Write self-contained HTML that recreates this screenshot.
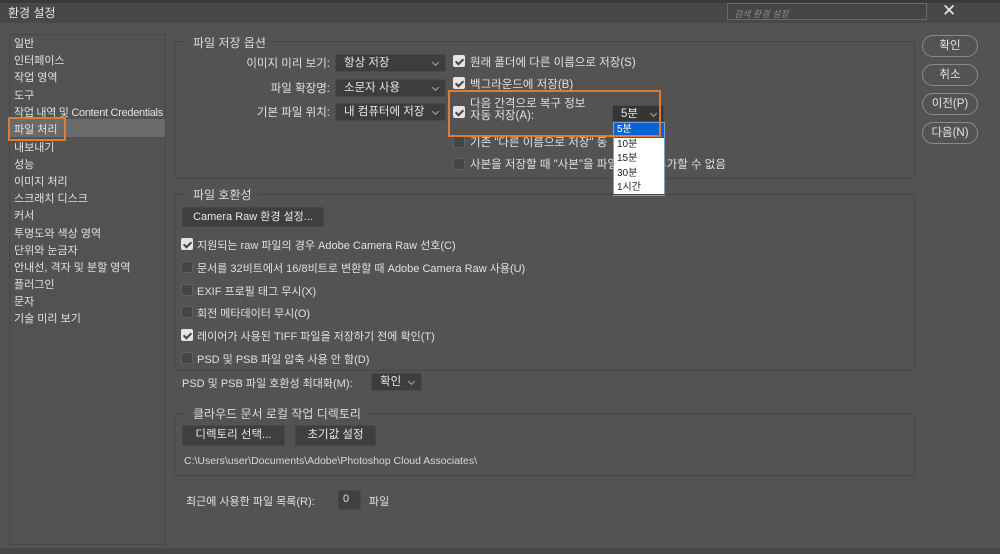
<!DOCTYPE html>
<html><head><meta charset="utf-8"><style>
*{margin:0;padding:0;box-sizing:border-box}
body{width:1000px;height:554px;background:#535353;font-family:"Liberation Sans","Noto Sans CJK KR",sans-serif;font-size:11px;color:#e0e0e0;position:relative;overflow:hidden}
.a{position:absolute;white-space:nowrap}
.fs{position:absolute;border:1px solid #474747;border-radius:2px}
.lg{position:absolute;background:#535353;padding:0 5px;font-size:12px;color:#dcdcdc}
.sel{position:absolute;background:#3d3d3d;border:1px solid #4a4a4a;padding-left:8px;line-height:16px;font-size:11.5px;color:#e8e8e8}
.sel:after{content:"";position:absolute;right:7px;top:5px;width:4px;height:4px;border-right:1px solid #aaa;border-bottom:1px solid #aaa;transform:rotate(45deg)}
.cb{position:absolute;width:12px;height:12px;border-radius:2px;background:#454545;border:1px solid #606060}
.cb.on{background:#e4e4e4;border-color:#e4e4e4}
.cb.on:after{content:"";position:absolute;left:3px;top:1px;width:3px;height:6px;border-right:2px solid #444;border-bottom:2px solid #444;transform:rotate(45deg)}
.btn{position:absolute;background:#3f3f3f;border:1px solid #474747;text-align:center;font-size:11px;color:#e8e8e8}
.pill{position:absolute;width:56px;height:22px;border:1px solid #8a8a8a;border-radius:11px;text-align:center;line-height:20px;font-size:11.5px;color:#e4e4e4}
.sb{position:absolute;left:14px;font-size:11px;color:#e0e0e0}
</style></head><body>
<div class="a" style="left:0;top:0;width:1000px;height:3px;background:#3a3a3a"></div>
<div class="a" style="left:0;top:3px;width:1000px;height:20px;background:#484848"></div>
<div class="a" style="left:8px;top:4px;font-size:12px;color:#e6e6e6">환경 설정</div>
<div class="a" style="left:727px;top:3px;width:200px;height:17px;border:1px solid #6a6a6a;background:#454545;color:#8a8a8a;font-style:italic;font-size:9px;padding:3px 6px">검색 환경 설정</div>
<div class="a" style="left:942px;top:1px;font-size:17px;color:#e6e6e6">✕</div>

<div class="a" style="left:9px;top:34px;width:157px;height:511px;border:1px solid #474747;background:#525252"></div>
<div class="a" style="left:10px;top:119px;width:155px;height:18px;background:#6b6b6b"></div>
<div class="sb a" style="top:35px">일반</div>
<div class="sb a" style="top:52px">인터페이스</div>
<div class="sb a" style="top:69px">작업 영역</div>
<div class="sb a" style="top:87px">도구</div>
<div class="sb a" style="top:104px;letter-spacing:-0.3px">작업 내역 및 Content Credentials</div>
<div class="sb a" style="top:121px">파일 처리</div>
<div class="a" style="left:8px;top:117px;width:58px;height:24px;border:2px solid #e07b33"></div>
<div class="sb a" style="top:139px">내보내기</div>
<div class="sb a" style="top:156px">성능</div>
<div class="sb a" style="top:173px">이미지 처리</div>
<div class="sb a" style="top:190px">스크래치 디스크</div>
<div class="sb a" style="top:207px">커서</div>
<div class="sb a" style="top:225px">투명도와 색상 영역</div>
<div class="sb a" style="top:242px">단위와 눈금자</div>
<div class="sb a" style="top:259px">안내선, 격자 및 분할 영역</div>
<div class="sb a" style="top:276px">플러그인</div>
<div class="sb a" style="top:293px">문자</div>
<div class="sb a" style="top:310px">기술 미리 보기</div>

<div class="fs" style="left:174px;top:41px;width:741px;height:138px"></div>
<div class="lg" style="left:188px;top:34px">파일 저장 옵션</div>
<div class="a" style="left:200px;top:55px;width:130px;text-align:right;font-size:11.5px">이미지 미리 보기:</div>
<div class="a" style="left:200px;top:80px;width:130px;text-align:right;font-size:11.5px">파일 확장명:</div>
<div class="a" style="left:200px;top:104px;width:130px;text-align:right;font-size:11.5px">기본 파일 위치:</div>
<div class="sel" style="left:335px;top:54px;width:111px;height:18px">항상 저장</div>
<div class="sel" style="left:335px;top:79px;width:111px;height:18px">소문자 사용</div>
<div class="sel" style="left:335px;top:103px;width:111px;height:18px">내 컴퓨터에 저장</div>
<div class="cb on" style="left:453px;top:55px"></div><div class="a" style="left:470px;top:54px;font-size:11.5px">원래 폴더에 다른 이름으로 저장(S)</div>
<div class="cb on" style="left:453px;top:77px"></div><div class="a" style="left:470px;top:76px;font-size:11.5px">백그라운드에 저장(B)</div>
<div class="cb on" style="left:453px;top:106px"></div>
<div class="a" style="left:470px;top:98px;font-size:11.5px;line-height:12px">다음 간격으로 복구 정보<br>자동 저장(A):</div>
<div class="cb" style="left:453px;top:136px"></div><div class="a" style="left:470px;top:134px;font-size:11.5px">기존 "다른 이름으로 저장" 동</div>
<div class="cb" style="left:453px;top:158px"></div><div class="a" style="left:470px;top:156px;font-size:11.5px">사본을 저장할 때 "사본"을 파일 이름에 추가할 수 없음</div>
<div class="sel" style="left:612px;top:105px;width:52px;height:17px;background:#353535">5분</div>
<div class="a" style="left:613px;top:122px;width:52px;height:74px;background:#fff;border:1px solid #7a9ed0;color:#222;font-size:10px;line-height:14.5px">
<div style="background:#0a63d6;color:#fff;padding-left:3px">5분</div>
<div style="padding-left:3px">10분</div><div style="padding-left:3px">15분</div><div style="padding-left:3px">30분</div><div style="padding-left:3px">1시간</div></div>
<div class="a" style="left:448px;top:90px;width:213px;height:47px;border:2px solid #e07b33"></div>

<div class="fs" style="left:174px;top:194px;width:741px;height:177px"></div>
<div class="lg" style="left:188px;top:186px">파일 호환성</div>
<div class="btn" style="left:182px;top:207px;width:142px;height:20px;line-height:18px">Camera Raw 환경 설정...</div>
<div class="cb on" style="left:181px;top:238px"></div><div class="a" style="left:197px;top:237px;font-size:11px">지원되는 raw 파일의 경우 Adobe Camera Raw 선호(C)</div>
<div class="cb" style="left:181px;top:261px"></div><div class="a" style="left:197px;top:260px;font-size:11px">문서를 32비트에서 16/8비트로 변환할 때 Adobe Camera Raw 사용(U)</div>
<div class="cb" style="left:181px;top:284px"></div><div class="a" style="left:197px;top:283px;font-size:11px">EXIF 프로필 태그 무시(X)</div>
<div class="cb" style="left:181px;top:306px"></div><div class="a" style="left:197px;top:305px;font-size:11px">회전 메타데이터 무시(O)</div>
<div class="cb on" style="left:181px;top:329px"></div><div class="a" style="left:197px;top:328px;font-size:11px">레이어가 사용된 TIFF 파일을 저장하기 전에 확인(T)</div>
<div class="cb" style="left:181px;top:352px"></div><div class="a" style="left:197px;top:351px;font-size:11px">PSD 및 PSB 파일 압축 사용 안 함(D)</div>
<div class="a" style="left:182px;top:375px;font-size:11px">PSD 및 PSB 파일 호환성 최대화(M):</div>
<div class="sel" style="left:371px;top:373px;width:51px;height:18px;padding-left:8px">확인</div>

<div class="fs" style="left:174px;top:413px;width:741px;height:63px"></div>
<div class="lg" style="left:188px;top:405px">클라우드 문서 로컬 작업 디렉토리</div>
<div class="btn" style="left:182px;top:425px;width:103px;height:21px;line-height:19px;font-size:11.5px">디렉토리 선택...</div>
<div class="btn" style="left:295px;top:425px;width:81px;height:21px;line-height:19px;font-size:11.5px">초기값 설정</div>
<div class="a" style="left:184px;top:455px;font-size:10.5px;color:#d8d8d8">C:\Users\user\Documents\Adobe\Photoshop Cloud Associates\</div>
<div class="a" style="left:186px;top:493px;font-size:11px">최근에 사용한 파일 목록(R):</div>
<div class="a" style="left:338px;top:490px;width:23px;height:20px;background:#404040;border:1px solid #4a4a4a;padding:2px 4px;font-size:11px">0</div>
<div class="a" style="left:369px;top:493px;font-size:11px">파일</div>
<div class="a" style="left:0;top:548px;width:1000px;height:6px;background:#474747"></div>

<div class="pill" style="left:922px;top:35px">확인</div>
<div class="pill" style="left:922px;top:64px">취소</div>
<div class="pill" style="left:922px;top:93px">이전(P)</div>
<div class="pill" style="left:922px;top:122px">다음(N)</div>
</body></html>
